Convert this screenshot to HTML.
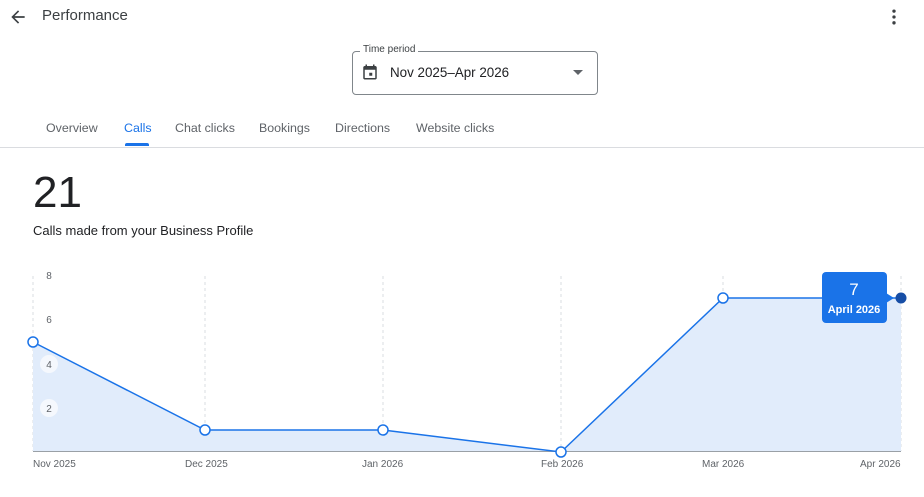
<!DOCTYPE html><html><head><style>
body{margin:0;width:924px;height:497px;background:#fff;font-family:"Liberation Sans",Arial,sans-serif;position:relative;overflow:hidden;color:#3c4043}
.a{position:absolute}
.tab{position:absolute;top:121px;font-size:12.4px;color:#5f6368}
</style></head><body>
<svg class="a" style="left:8px;top:7px" width="20" height="20" viewBox="0 0 24 24"><path d="M20 11H7.8l5.6-5.6L12 4l-8 8 8 8 1.4-1.4L7.8 13H20z" fill="#3c4043"/></svg>
<div class="a" style="left:42px;top:7px;font-size:15px;color:#3c4043">Performance</div>
<svg class="a" style="left:884px;top:7px" width="20" height="20" viewBox="0 0 24 24"><circle cx="12" cy="5" r="2" fill="#3c4043"/><circle cx="12" cy="12" r="2" fill="#3c4043"/><circle cx="12" cy="19" r="2" fill="#3c4043"/></svg>
<div class="a" style="left:352px;top:51px;width:244px;height:42px;border:1px solid #80868b;border-radius:4px"></div>
<div class="a" style="left:360px;top:44px;background:#fff;padding:0 3px;font-size:10px;color:#3c4043">Time period</div>
<svg class="a" style="left:361px;top:63px" width="18" height="18" viewBox="0 0 24 24"><path d="M19 4h-1V2h-2v2H8V2H6v2H5c-1.1 0-2 .9-2 2v14c0 1.1.9 2 2 2h14c1.100 0 2-.9 2-2V6c0-1.1-.9-2-2-2zm0 16H5V9h14v11z" fill="#3c4043"/><rect x="11" y="13" width="4" height="4" fill="#3c4043"/></svg>
<div class="a" style="left:390px;top:65px;font-size:13.4px;color:#202124">Nov 2025–Apr 2026</div>
<div class="a" style="left:573px;top:70px;width:0;height:0;border-left:5px solid transparent;border-right:5px solid transparent;border-top:5px solid #5f6368"></div>
<div class="tab" style="left:46px">Overview</div>
<div class="tab" style="left:124px;color:#1a73e8">Calls</div>
<div class="tab" style="left:175px">Chat clicks</div>
<div class="tab" style="left:259px">Bookings</div>
<div class="tab" style="left:335px">Directions</div>
<div class="tab" style="left:416px">Website clicks</div>
<div class="a" style="left:125px;top:143px;width:24px;height:3px;background:#1a73e8;border-radius:2px 2px 0 0"></div>
<div class="a" style="left:0;top:147px;width:924px;height:1px;background:#dadce0"></div>
<div class="a" style="left:33px;top:168px;font-size:44px;color:#202124">21</div>
<div class="a" style="left:33px;top:223px;font-size:13px;color:#202124">Calls made from your Business Profile</div>
<svg class="a" style="left:0;top:0" width="924" height="497">
<g stroke="#dadce0" stroke-dasharray="3,3"><line x1="33" y1="276" x2="33" y2="451"/><line x1="205" y1="276" x2="205" y2="451"/><line x1="383" y1="276" x2="383" y2="451"/><line x1="561" y1="276" x2="561" y2="451"/><line x1="723" y1="276" x2="723" y2="451"/><line x1="901" y1="276" x2="901" y2="451"/></g>
<path d="M33 342L205 430L383 430L561 452L723 298L901 298L901 451L33 451Z" fill="#e1ecfb"/>
<line x1="33" y1="451.5" x2="901" y2="451.5" stroke="#9aa0a6"/>
<path d="M33 342L205 430L383 430L561 452L723 298L901 298" fill="none" stroke="#1a73e8" stroke-width="1.5"/>
<g fill="#fff" stroke="#1a73e8" stroke-width="1.5"><circle cx="33" cy="342" r="5"/><circle cx="205" cy="430" r="5"/><circle cx="383" cy="430" r="5"/><circle cx="561" cy="452" r="5"/><circle cx="723" cy="298" r="5"/></g>
<circle cx="901" cy="298" r="5.5" fill="#174ea6"/>
<circle cx="49" cy="364" r="9" fill="#f5f8fd"/><circle cx="49" cy="408" r="9" fill="#f5f8fd"/>
<g font-size="10" fill="#5f6368" text-anchor="middle"><text x="49" y="279">8</text><text x="49" y="323">6</text><text x="49" y="368">4</text><text x="49" y="412">2</text></g>
<g font-size="10" fill="#5f6368"><text x="33" y="467">Nov 2025</text><text x="185" y="467">Dec 2025</text><text x="362" y="467">Jan 2026</text><text x="541" y="467">Feb 2026</text><text x="702" y="467">Mar 2026</text><text x="860" y="467">Apr 2026</text></g>
<path d="M886 293L894 298L886 303Z" fill="#1a73e8"/>
<rect x="822" y="272" width="65" height="51" rx="4" fill="#1a73e8"/>
<text x="854" y="295" font-size="17" fill="#fff" text-anchor="middle">7</text>
<text x="854" y="313" font-size="11" font-weight="bold" fill="#fff" text-anchor="middle">April 2026</text>
</svg>
</body></html>
